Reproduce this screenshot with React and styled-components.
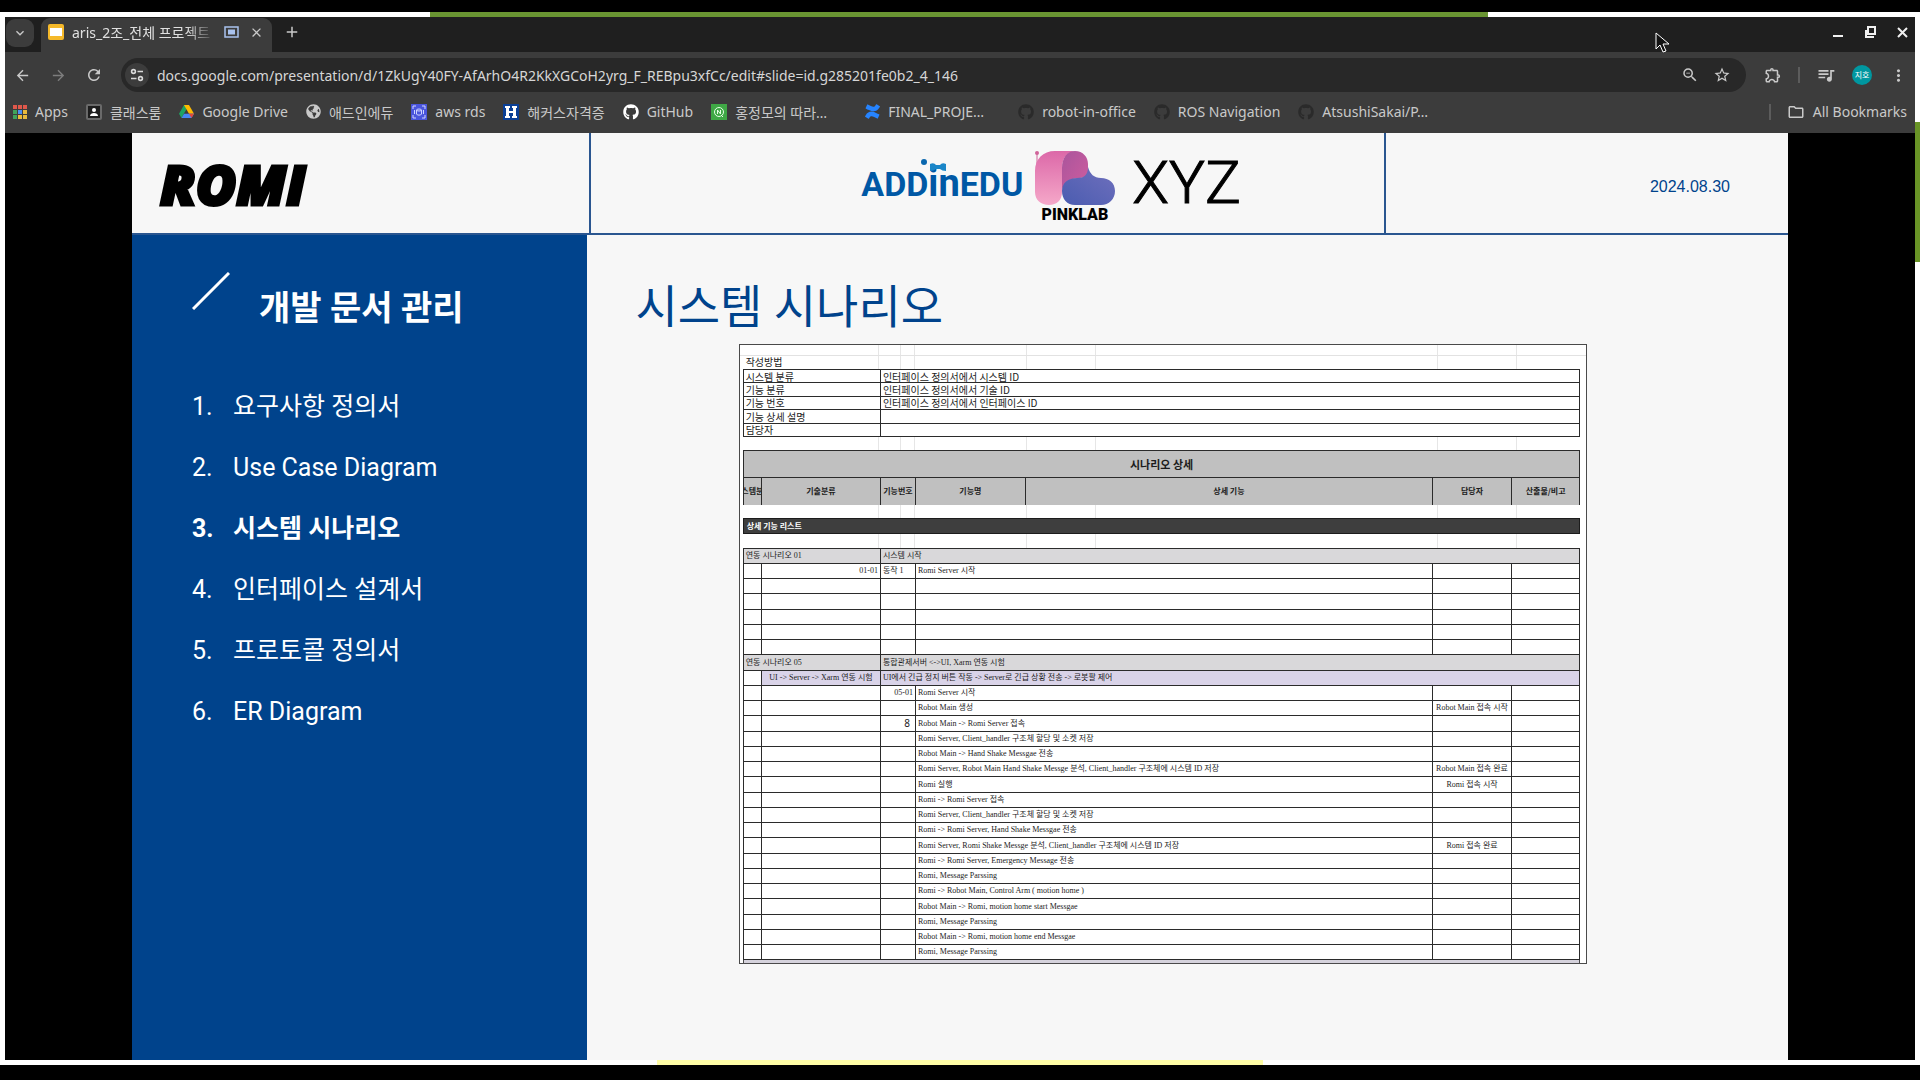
import React from "react";
import styled, { createGlobalStyle } from "styled-components";
import {
  MdArrowBack,
  MdArrowForward,
  MdClose,
  MdAdd,
  MdExpandMore,
  MdMoreVert,
  MdOutlineExtension,
  MdOutlineFolder,
  MdQueueMusic,
  MdRefresh,
  MdStarBorder,
  MdZoomOut,
} from "react-icons/md";
import { FaGithub, FaGlobeAmericas } from "react-icons/fa";
import { SiConfluence } from "react-icons/si";

const uiFont = `"Noto Sans", "Noto Sans CJK KR", sans-serif`;
const slideFont = `Roboto, "Noto Sans CJK KR", sans-serif`;
const sheetFont = `"Liberation Serif", "Noto Sans CJK KR", serif`;
const navy = "#00438c";

const GlobalStyle = createGlobalStyle`
  * {
    box-sizing: border-box;
  }

  body {
    margin: 0;
    background-color: #000;
  }

  button {
    font: inherit;
    color: inherit;
    border: none;
    padding: 0;
    background: none;
    cursor: pointer;
  }
`;

const Desktop = styled.div`
  min-height: 100vh;
  display: flex;
  flex-direction: column;
  padding: 12px 0 15px;
  font-family: ${uiFont};
`;

const Edge = styled.div`
  height: 5px;
  padding-left: ${(props) => props.$start};
  background-color: #fff;
`;

const EdgeMark = styled.div`
  width: ${(props) => props.$length};
  height: 5px;
  background-color: ${(props) => props.$color};
`;

const Middle = styled.div`
  flex: 1;
  display: grid;
  grid-template-columns: 5px minmax(0, 1fr) 5px;
  background-color: #fff;
`;

const SideEdge = styled.div`
  padding-top: 105px;
`;

const SideMark = styled.div`
  height: 140px;
  background-color: #699426;
`;

const Browser = styled.div`
  display: flex;
  flex-direction: column;
  background-color: #000;
  color: #c9c9c9;
`;

const TabStrip = styled.div`
  height: 35px;
  display: flex;
  align-items: flex-start;
  padding: 1px 0 0 1px;
  background-color: #1f1f1f;
`;

const TabSearch = styled.button`
  width: 28px;
  height: 28px;
  display: grid;
  place-items: center;
  border-radius: 9px;
  background-color: #3c3c3c;
  margin: 1px 7px 0 0;
`;

const Tab = styled.div`
  width: 231px;
  height: 34px;
  display: flex;
  align-items: center;
  padding: 0 8px 6px 7px;
  border-radius: 9px 9px 0 0;
  background-color: #3c3c3c;
`;

const TabTitle = styled.span`
  flex: 1;
  margin: 0 9px 0 8px;
  overflow: hidden;
  white-space: nowrap;
  font-size: 14px;
  color: #e0e0e0;
  mask-image: linear-gradient(to right, #000 80%, transparent);
`;

const TabClose = styled.button`
  display: grid;
  place-items: center;
  margin-left: 9px;
  width: 16px;
  height: 16px;
`;

const NewTab = styled.button`
  display: grid;
  place-items: center;
  width: 20px;
  height: 28px;
  margin-left: 10px;
`;

const WindowControls = styled.div`
  margin-left: auto;
  display: flex;
  align-items: center;
  gap: 16px;
  padding-right: 5px;
  color: #f0f0f0;

  button {
    display: grid;
    place-items: center;
    width: 16px;
    height: 28px;
  }
`;

const Toolbar = styled.div`
  height: 46px;
  display: flex;
  align-items: center;
  padding: 0 7px;
  background-color: #3c3c3c;
`;

const ToolButton = styled.button`
  display: grid;
  place-items: center;
  width: 20px;
  height: 20px;
  margin-right: ${(props) => props.$gap || 0}px;
  color: ${(props) => (props.$dim ? "#7d7d7d" : "#c9c9c9")};
`;

const AddressBar = styled.div`
  flex: 1;
  height: 34px;
  display: flex;
  align-items: center;
  margin-right: 17px;
  padding: 0 14px 0 4px;
  border-radius: 17px;
  background-color: #282828;
`;

const SiteInfo = styled.button`
  width: 24px;
  height: 24px;
  display: grid;
  place-items: center;
  border-radius: 50%;
  background-color: #3c3c3c;
`;

const Address = styled.input`
  flex: 1;
  min-width: 0;
  padding: 0 0 0 8px;
  border: none;
  outline: none;
  background: none;
  color: #d6d6d6;
  font-family: ${uiFont};
  font-size: 14px;
`;

const Divider = styled.span`
  width: 2px;
  height: 16px;
  margin-right: 16px;
  background-color: #5c5c5c;
`;

const Avatar = styled.button`
  width: 20px;
  height: 20px;
  margin: 0 16px;
  border-radius: 50%;
  background-color: #0097a0;
  color: #fff;
  font-size: 8px;
  line-height: 20px;
`;

const BookmarkBar = styled.nav`
  height: 35px;
  display: flex;
  align-items: center;
  padding: 0 8px 8px;
  background-color: #3c3c3c;
  font-size: 14px;
`;

const Bookmark = styled.a`
  display: flex;
  align-items: center;
  gap: 8px;
  margin-right: 18px;
  white-space: nowrap;
  color: inherit;
  text-decoration: none;
`;

const BookmarkLabel = styled.span`
  min-width: ${(props) => (props.$long ? "112px" : "0")};
`;

const BookmarkEnd = styled.div`
  margin-left: auto;
  display: flex;
  align-items: center;

  a {
    margin-right: 0;
  }
`;

const Slide = styled.main`
  flex: 1;
  width: 86.7%;
  margin: 0 auto;
  display: flex;
  flex-direction: column;
  background-color: #f7f7f7;
  font-family: ${slideFont};
`;

const SlideHeader = styled.header`
  display: grid;
  grid-template-columns: 27.6% 48% 1fr;
  height: 102px;
  border-bottom: 2px solid #2a5690;
`;

const HeaderCell = styled.div`
  display: flex;
  align-items: center;
  justify-content: ${(props) => (props.$end ? "flex-end" : "flex-start")};
  padding: ${(props) => props.$padding};
  border-left: ${(props) => (props.$line ? "2px solid #2a5690" : "none")};
`;

const Romi = styled.div`
  font-family: "Open Sans", sans-serif;
  font-size: 55px;
  font-weight: 800;
  font-style: italic;
  line-height: 1;
  color: #000;
  -webkit-text-stroke: 3px #000;
`;

const Addinedu = styled.div`
  position: relative;
  font-size: 34px;
  font-weight: 700;
  line-height: 40px;
  color: #0058a5;

  em {
    font-style: normal;
    font-size: 38px;
    line-height: 40px;
  }

  svg {
    position: absolute;
    left: 60px;
    top: -4px;
  }
`;

const Pinklab = styled.div`
  display: flex;
  flex-direction: column;
  align-items: center;
  margin: 8px 17px 0 11px;
  font-size: 16px;
  font-weight: 900;
  line-height: 20px;
  color: #000;
`;

const Xyz = styled.div`
  font-size: 60px;
  font-weight: 300;
  line-height: 1;
  color: #000;
  -webkit-text-stroke: 1px #000;
`;

const SlideDate = styled.time`
  font-family: "Liberation Sans", sans-serif;
  font-size: 16px;
  color: ${navy};
`;

const SlideBody = styled.div`
  flex: 1;
  display: grid;
  grid-template-columns: 27.5% minmax(0, 1fr);
`;

const Sidebar = styled.aside`
  padding: 37px 24px 0 60px;
  background-color: ${navy};
  color: #fff;
`;

const SidebarTitle = styled.div`
  display: flex;
  align-items: flex-start;
  gap: 29px;

  h2 {
    margin: 11px 0 0;
    font-size: 34px;
    line-height: 50px;
    font-weight: 700;
  }
`;

const Chapters = styled.ol`
  margin: 43px 0 0;
  padding: 0;
  list-style: none;
`;

const Chapter = styled.li`
  display: flex;
  height: 61px;
  align-items: baseline;
  font-size: 25px;
  line-height: 61px;
  font-weight: ${(props) => (props.$active ? 700 : 400)};

  span {
    width: 41px;
  }
`;

const Content = styled.section`
  padding: 38px 0 0;

  h1 {
    margin: 0 0 0 48px;
    font-size: 46px;
    font-weight: 400;
    line-height: 68px;
    color: ${navy};
  }
`;

// faint spreadsheet grid that shows through wherever no table covers it
const gridStops = ["16.4%", "19%", "20.6%", "33.8%", "42%", "82.4%", "91.8%"];

const Sheet = styled.div`
  width: 70.7%;
  margin: 3px 0 0 12.6%;
  padding: 11px 6px 0 3px;
  border: 1px solid #4a4a4a;
  font-family: ${sheetFont};
  color: #1c1c1c;
  background-color: #fff;
  background-image: linear-gradient(#e2e2e2, #e2e2e2),
    ${gridStops.map(() => "linear-gradient(#e6e6e6, #e6e6e6)").join(", ")};
  background-size: 100% 1px, ${gridStops.map(() => "1px 100%").join(", ")};
  background-position: 0 10px, ${gridStops.map((x) => `${x} 0`).join(", ")};
  background-repeat: no-repeat;
`;

const Table = styled.table`
  width: 100%;
  margin-bottom: ${(props) => props.$after || 0}px;
  border-collapse: collapse;
  table-layout: fixed;
  font-size: 8px;
  line-height: 12px;
  background-color: #fff;
`;

const GuideTable = styled(Table)`
  height: 68px;
`;

const ScenarioTable = styled(Table)`
  tr {
    height: 15px;
  }

  tr:nth-child(4n) {
    height: 16px;
  }
`;

const Cell = styled.td`
  padding: 1px 2px 0;
  overflow: hidden;
  white-space: nowrap;
  border: 1px solid #2b2b2b;
  text-align: ${(props) => props.$align || "left"};
  background-color: ${(props) => props.$fill || "transparent"};
`;

const GuideCell = styled(Cell)`
  padding-top: 0;
  font-family: "Noto Sans CJK KR", sans-serif;
  font-size: 10px;
  line-height: 11px;
`;

const LooseMark = styled.span`
  padding-right: 3px;
  font-family: "Noto Sans", sans-serif;
  font-size: 10px;
`;

const HeadCell = styled.th`
  height: 27px;
  padding: 0;
  overflow: hidden;
  white-space: nowrap;
  border: 1px solid #2b2b2b;
  border-bottom-width: ${(props) => (props.$title ? "1px" : "0")};
  background-color: #c0c0c0;
  font-family: "Noto Sans CJK KR", sans-serif;
  font-size: ${(props) => (props.$title ? "11px" : "8px")};
`;

// label wider than its column, cut evenly on both sides
const Clipped = styled.span`
  display: flex;
  justify-content: center;
`;

const GuideCaption = styled.caption`
  height: 13px;
  padding-left: 3px;
  text-align: left;
  font-family: "Noto Sans CJK KR", sans-serif;
  font-size: 10px;
  line-height: 12px;
`;

const ListBar = styled.h3`
  margin: 0 0 14px;
  height: 16px;
  padding-left: 3px;
  border: 1px solid #1c1c1c;
  background-color: #3e3e3e;
  color: #fff;
  font-family: "Noto Sans CJK KR", sans-serif;
  font-size: 8px;
  line-height: 14px;
`;

const LastStrip = styled.div`
  height: 3px;
  border: 1px solid #4a4a4a;
  border-width: 0 1px;
  background-color: #d5d2dc;
`;

const Pointer = styled.svg`
  position: absolute;
  left: 1655px;
  top: 32px;
`;

const bookmarks = [
  { label: "Apps", icon: <AppsIcon /> },
  { label: "클래스룸", icon: <ClassroomIcon /> },
  { label: "Google Drive", icon: <DriveIcon /> },
  { label: "애드인에듀", icon: <FaGlobeAmericas size={15} /> },
  { label: "aws rds", icon: <AwsIcon /> },
  { label: "해커스자격증", icon: <HackersIcon /> },
  { label: "GitHub", icon: <FaGithub size={16} color="#fff" /> },
  { label: "홍정모의 따라…", icon: <LectureIcon />, long: true },
  { label: "FINAL_PROJE…", icon: <SiConfluence size={15} color="#2684ff" />, long: true },
  { label: "robot-in-office", icon: <FaGithub size={16} color="#2a2a2a" /> },
  { label: "ROS Navigation", icon: <FaGithub size={16} color="#2a2a2a" /> },
  { label: "AtsushiSakai/P…", icon: <FaGithub size={16} color="#2a2a2a" /> },
];

const chapters = [
  "요구사항 정의서",
  "Use Case Diagram",
  "시스템 시나리오",
  "인터페이스 설계서",
  "프로토콜 정의서",
  "ER Diagram",
];

const guide = [
  ["시스템 분류", "인터페이스 정의서에서 시스템 ID"],
  ["기능 분류", "인터페이스 정의서에서 기술 ID"],
  ["기능 번호", "인터페이스 정의서에서 인터페이스 ID"],
  ["기능 상세 설명", ""],
  ["담당자", ""],
];

const steps = [
  { no: "05-01", text: "Romi Server 시작" },
  { text: "Robot Main 생성", owner: "Robot Main 접속 시작" },
  { no: <LooseMark>8</LooseMark>, text: "Robot Main -> Romi Server 접속" },
  { text: "Romi Server, Client_handler 구조체 할당 및 소켓 저장" },
  { text: "Robot Main -> Hand Shake Messgae 전송" },
  {
    text: "Romi Server, Robot Main Hand Shake Messge 분석, Client_handler 구조체에 시스템 ID 저장",
    owner: "Robot Main 접속 완료",
  },
  { text: "Romi 실행", owner: "Romi 접속 시작" },
  { text: "Romi -> Romi Server 접속" },
  { text: "Romi Server, Client_handler 구조체 할당 및 소켓 저장" },
  { text: "Romi -> Romi Server, Hand Shake Messgae 전송" },
  {
    text: "Romi Server, Romi Shake Messge 분석, Client_handler 구조체에 시스템 ID 저장",
    owner: "Romi 접속 완료",
  },
  { text: "Romi -> Romi Server, Emergency Message 전송" },
  { text: "Romi, Message Parssing" },
  { text: "Romi -> Robot Main, Control Arm ( motion home )" },
  { text: "Robot Main -> Romi, motion home start Messgae" },
  { text: "Romi, Message Parssing" },
  { text: "Robot Main -> Romi, motion home end Messgae" },
  { text: "Romi, Message Parssing" },
];

const columns = ["2.2%", "14.2%", "4.2%", "13.1%", "48.7%", "9.4%", "8.2%"];

function AppsIcon() {
  const colors = ["#e0584b", "#e0584b", "#e0584b", "#3fa35b", "#4d8ef0", "#e9b93b", "#3fa35b", "#e9b93b", "#e9b93b"];
  return (
    <svg width="14" height="16" viewBox="0 0 14 16">
      {colors.map((color, i) => (
        <rect key={i} x={(i % 3) * 5} y={1 + Math.floor(i / 3) * 5} width="4" height="4" fill={color} />
      ))}
    </svg>
  );
}

function ClassroomIcon() {
  return (
    <svg width="16" height="16" viewBox="0 0 16 16">
      <rect width="16" height="16" rx="2" fill="#6a6a6a" />
      <rect x="2" y="2" width="12" height="12" fill="#1d1d1d" />
      <circle cx="8" cy="6" r="2" fill="#fff" />
      <path d="M4 12c0-4 8-4 8 0z" fill="#fff" />
    </svg>
  );
}

function DriveIcon() {
  return (
    <svg width="15" height="14" viewBox="0 0 15 14">
      <path d="M5 0h5L5 8.500 2.500 13 0 8.800z" fill="#1ea362" />
      <path d="M5 0h5l5 8.800h-5z" fill="#ffba00" />
      <path d="M5 8.800h10L12.500 13h-10z" fill="#4688f4" />
      <path d="M10 8.800h5L12.500 13z" fill="#e2473a" />
    </svg>
  );
}

function AwsIcon() {
  return (
    <svg width="16" height="16" viewBox="0 0 16 16" fill="none" stroke="#cfd4ff">
      <rect width="16" height="16" fill="#4a55dc" stroke="none" />
      <path d="M2 5V2h3M11 2h3v3M14 11v3h-3M5 14H2v-3" />
      <ellipse cx="8" cy="6" rx="2.500" ry="1" />
      <path d="M5.500 6v4c0 1.500 5 1.500 5 0V6M3.500 6v4M12.500 6v4" />
    </svg>
  );
}

function HackersIcon() {
  return (
    <svg width="16" height="16" viewBox="0 0 16 16">
      <rect width="16" height="16" fill="#0a3f96" />
      <path d="M2 2h5v2H6v3h4V4H9V2h5v2h-1v8h1v2H9v-2h1V9H6v3h1v2H2v-2h1V4H2z" fill="#fff" />
    </svg>
  );
}

function LectureIcon() {
  return (
    <svg width="16" height="16" viewBox="0 0 16 16" fill="none" stroke="#e6ffe6">
      <rect width="16" height="16" fill="#3fa845" stroke="none" />
      <circle cx="8" cy="8" r="4.500" />
      <path d="M6.500 10V6l3 4V6M10 11l2 2" />
    </svg>
  );
}

function SlidesIcon() {
  return (
    <svg width="16" height="16" viewBox="0 0 16 16">
      <rect width="16" height="16" rx="2" fill="#f5b92a" />
      <rect x="2" y="4" width="12" height="8" fill="#fff" />
    </svg>
  );
}

function CastingIcon() {
  return (
    <svg width="15" height="12" viewBox="0 0 15 12">
      <rect x="1" y="1" width="13" height="10" fill="none" stroke="#a9c2ee" strokeWidth="1.500" />
      <rect x="4" y="3.500" width="7" height="5" fill="#a9c2ee" />
    </svg>
  );
}

function SiteInfoIcon() {
  return (
    <svg width="14" height="14" viewBox="0 0 14 14" fill="none" stroke="#dadada" strokeWidth="1.600">
      <circle cx="3.500" cy="3.500" r="1.900" />
      <path d="M7.500 3.500H13M1 10.500h5.500" />
      <circle cx="10.500" cy="10.500" r="1.900" />
    </svg>
  );
}

function WindowIcon({ children }) {
  return (
    <svg width="16" height="16" viewBox="0 0 16 16" fill="none" stroke="currentColor" strokeWidth="2">
      {children}
    </svg>
  );
}

function BowTie() {
  return (
    <svg width="28" height="12" viewBox="0 0 28 12">
      <circle cx="3" cy="3" r="3" fill="#0a67ae" />
      <path d="M9 5Q13 3 15 6h4Q21 3 25 5v7Q21 12 19 10h-4Q13 12 9 12z" fill="#1b86c8" />
    </svg>
  );
}

function PinklabMark() {
  return (
    <svg width="81" height="55" viewBox="-1 -1 81 55">
      <defs>
        <linearGradient id="pink" x1="0" y1="0" x2="0" y2="1">
          <stop offset="0" stopColor="#dc68a8" />
          <stop offset="1" stopColor="#f5a8c9" />
        </linearGradient>
        <linearGradient id="plum" x1="0" y1="0" x2="1" y2="1">
          <stop offset="0" stopColor="#a9559c" />
          <stop offset="1" stopColor="#cf5d9f" />
        </linearGradient>
        <linearGradient id="violet" x1="0" y1="1" x2="1" y2="0">
          <stop offset="0" stopColor="#4a5cb0" />
          <stop offset="1" stopColor="#7070bd" />
        </linearGradient>
      </defs>
      <circle cx="2" cy="2" r="2" fill="#d0649a" />
      <path d="M2 2v12" stroke="#d0649a" />
      <path d="M0 20C0 8 8 0 20 0h20Q27 2 27 18v23c0 8-5 13-13 13S0 49 0 41z" fill="url(#pink)" />
      <path d="M27 40V17C27 7 32 0 40 0c8 0 13 6 13 13v8c0 4-4 6-10 6-9 1-15 5-16 13z" fill="url(#plum)" />
      <path
        d="M27 40c0-8 6-13 15-13 7 0 11-3 11-11 2 7 6 11 13 11 8 0 14 5 14 13s-6 14-14 14H40c-8 0-13-6-13-14z"
        fill="url(#violet)"
      />
    </svg>
  );
}

const Columns = () => (
  <colgroup>
    {columns.map((width, i) => (
      <col key={i} width={width} />
    ))}
  </colgroup>
);

const StepRow = ({ group = "", no = "", text = "", owner = "", noAlign }) => (
  <tr>
    <Cell />
    <Cell $align="right">{group}</Cell>
    <Cell $align={noAlign}>{no}</Cell>
    <Cell colSpan={2}>{text}</Cell>
    <Cell $align="center">{owner}</Cell>
    <Cell />
  </tr>
);

const ScenarioSheet = () => (
  <Sheet>
    <GuideTable $after={13}>
      <GuideCaption>작성방법</GuideCaption>
      <colgroup>
        <col width="16.4%" />
        <col />
      </colgroup>
      <tbody>
        {guide.map(([name, value]) => (
          <tr key={name}>
            <GuideCell>{name}</GuideCell>
            <GuideCell>{value}</GuideCell>
          </tr>
        ))}
      </tbody>
    </GuideTable>
    <Table $after={13}>
      <Columns />
      <thead>
        <tr>
          <HeadCell colSpan={7} $title>시나리오 상세</HeadCell>
        </tr>
        <tr>
          <HeadCell>
            <Clipped>스템분</Clipped>
          </HeadCell>
          <HeadCell>기술분류</HeadCell>
          <HeadCell>기능번호</HeadCell>
          <HeadCell>기능명</HeadCell>
          <HeadCell>상세 기능</HeadCell>
          <HeadCell>담당자</HeadCell>
          <HeadCell>산출물/비고</HeadCell>
        </tr>
      </thead>
    </Table>
    <ListBar>상세 기능 리스트</ListBar>
    <ScenarioTable>
      <Columns />
      <tbody>
        <tr>
          <Cell colSpan={2} $fill="#d9d8da">연동 시나리오 01</Cell>
          <Cell colSpan={5} $fill="#d9d8da">시스템 시작</Cell>
        </tr>
        <StepRow group="01-01" no="동작 1" text="Romi Server 시작" />
        {[1, 2, 3, 4, 5].map((n) => (
          <StepRow key={n} />
        ))}
        <tr>
          <Cell colSpan={2} $fill="#d9d8da">연동 시나리오 05</Cell>
          <Cell colSpan={5} $fill="#d9d8da">{"통합관제서버 <->UI, Xarm 연동 시험"}</Cell>
        </tr>
        <tr>
          <Cell />
          <Cell $align="center" $fill="#d9d3e8">{"UI -> Server -> Xarm 연동 시험"}</Cell>
          <Cell colSpan={5} $fill="#d9d3e8">
            {"UI에서 긴급 정지 버튼 작동 -> Server로 긴급 상황 전송 -> 로봇팔 제어"}
          </Cell>
        </tr>
        {steps.map((step, i) => (
          <StepRow key={i} noAlign="right" {...step} />
        ))}
      </tbody>
    </ScenarioTable>
    <LastStrip />
  </Sheet>
);

const BrowserChrome = () => (
  <>
    <TabStrip>
      <TabSearch aria-label="Search tabs">
        <MdExpandMore size={16} />
      </TabSearch>
      <Tab>
        <SlidesIcon />
        <TabTitle>aris_2조_전체 프로젝트</TabTitle>
        <CastingIcon />
        <TabClose aria-label="Close tab">
          <MdClose size={15} />
        </TabClose>
      </Tab>
      <NewTab aria-label="New tab">
        <MdAdd size={18} />
      </NewTab>
      <WindowControls>
        <button aria-label="Minimize">
          <WindowIcon>
            <path d="M3 12h10" />
          </WindowIcon>
        </button>
        <button aria-label="Restore">
          <WindowIcon>
            <path d="M6 3h7v7H6zM4 6v7h8" />
          </WindowIcon>
        </button>
        <button aria-label="Close">
          <WindowIcon>
            <path d="M4 4l9 9M13 4l-9 9" />
          </WindowIcon>
        </button>
      </WindowControls>
    </TabStrip>
    <Toolbar>
      <ToolButton aria-label="Back" $gap={16}>
        <MdArrowBack size={17} />
      </ToolButton>
      <ToolButton aria-label="Forward" $gap={16} $dim>
        <MdArrowForward size={17} />
      </ToolButton>
      <ToolButton aria-label="Reload" $gap={17}>
        <MdRefresh size={18} />
      </ToolButton>
      <AddressBar>
        <SiteInfo aria-label="View site information">
          <SiteInfoIcon />
        </SiteInfo>
        <Address
          aria-label="Address"
          defaultValue="docs.google.com/presentation/d/1ZkUgY40FY-AfArhO4R2KkXGCoH2yrg_F_REBpu3xfCc/edit#slide=id.g285201fe0b2_4_146"
        />
        <ToolButton aria-label="Zoom" $gap={12}>
          <MdZoomOut size={18} />
        </ToolButton>
        <ToolButton aria-label="Bookmark this tab">
          <MdStarBorder size={18} />
        </ToolButton>
      </AddressBar>
      <ToolButton aria-label="Extensions" $gap={15}>
        <MdOutlineExtension size={18} />
      </ToolButton>
      <Divider />
      <ToolButton aria-label="Media">
        <MdQueueMusic size={20} />
      </ToolButton>
      <Avatar>지호</Avatar>
      <ToolButton aria-label="Menu">
        <MdMoreVert size={19} />
      </ToolButton>
    </Toolbar>
    <BookmarkBar>
      {bookmarks.map(({ label, icon, long }) => (
        <Bookmark key={label} href="#">
          {icon}
          <BookmarkLabel $long={long}>{label}</BookmarkLabel>
        </Bookmark>
      ))}
      <BookmarkEnd>
        <Divider />
        <Bookmark href="#">
          <MdOutlineFolder size={18} />
          All Bookmarks
        </Bookmark>
      </BookmarkEnd>
    </BookmarkBar>
  </>
);

const App = () => {
  return (
    <Desktop>
      <GlobalStyle />
      <Edge $start="22.4%">
        <EdgeMark $length="71%" $color="#699432" />
      </Edge>
      <Middle>
        <div />
        <Browser>
          <BrowserChrome />
          <Slide>
            <SlideHeader>
              <HeaderCell $padding="0 0 0 28px">
                <Romi>ROMI</Romi>
              </HeaderCell>
              <HeaderCell $line $padding="0 0 0 34%">
                <Addinedu>
                  ADD<em>in</em>EDU
                  <BowTie />
                </Addinedu>
                <Pinklab>
                  <PinklabMark />
                  PINKLAB
                </Pinklab>
                <Xyz>XYZ</Xyz>
              </HeaderCell>
              <HeaderCell $line $end $padding="8px 58px 0 0">
                <SlideDate>2024.08.30</SlideDate>
              </HeaderCell>
            </SlideHeader>
            <SlideBody>
              <Sidebar>
                <SidebarTitle>
                  <svg width="38" height="38" viewBox="0 0 38 38">
                    <path d="M1 37L37 1" stroke="#fff" strokeWidth="3" />
                  </svg>
                  <h2>개발 문서 관리</h2>
                </SidebarTitle>
                <Chapters>
                  {chapters.map((chapter, i) => (
                    <Chapter key={chapter} $active={i === 2}>
                      <span>{i + 1}.</span>
                      {chapter}
                    </Chapter>
                  ))}
                </Chapters>
              </Sidebar>
              <Content>
                <h1>시스템 시나리오</h1>
                <ScenarioSheet />
              </Content>
            </SlideBody>
          </Slide>
        </Browser>
        <SideEdge>
          <SideMark />
        </SideEdge>
      </Middle>
      <Edge $start="34.2%">
        <EdgeMark $length="48%" $color="#fffda6" />
      </Edge>
      <Pointer width="16" height="22" viewBox="0 0 16 22">
        <path d="M1 1v16l4-4 3 7 3-1-3-7h6z" fill="#111" stroke="#fff" />
      </Pointer>
    </Desktop>
  );
};

export default App;
